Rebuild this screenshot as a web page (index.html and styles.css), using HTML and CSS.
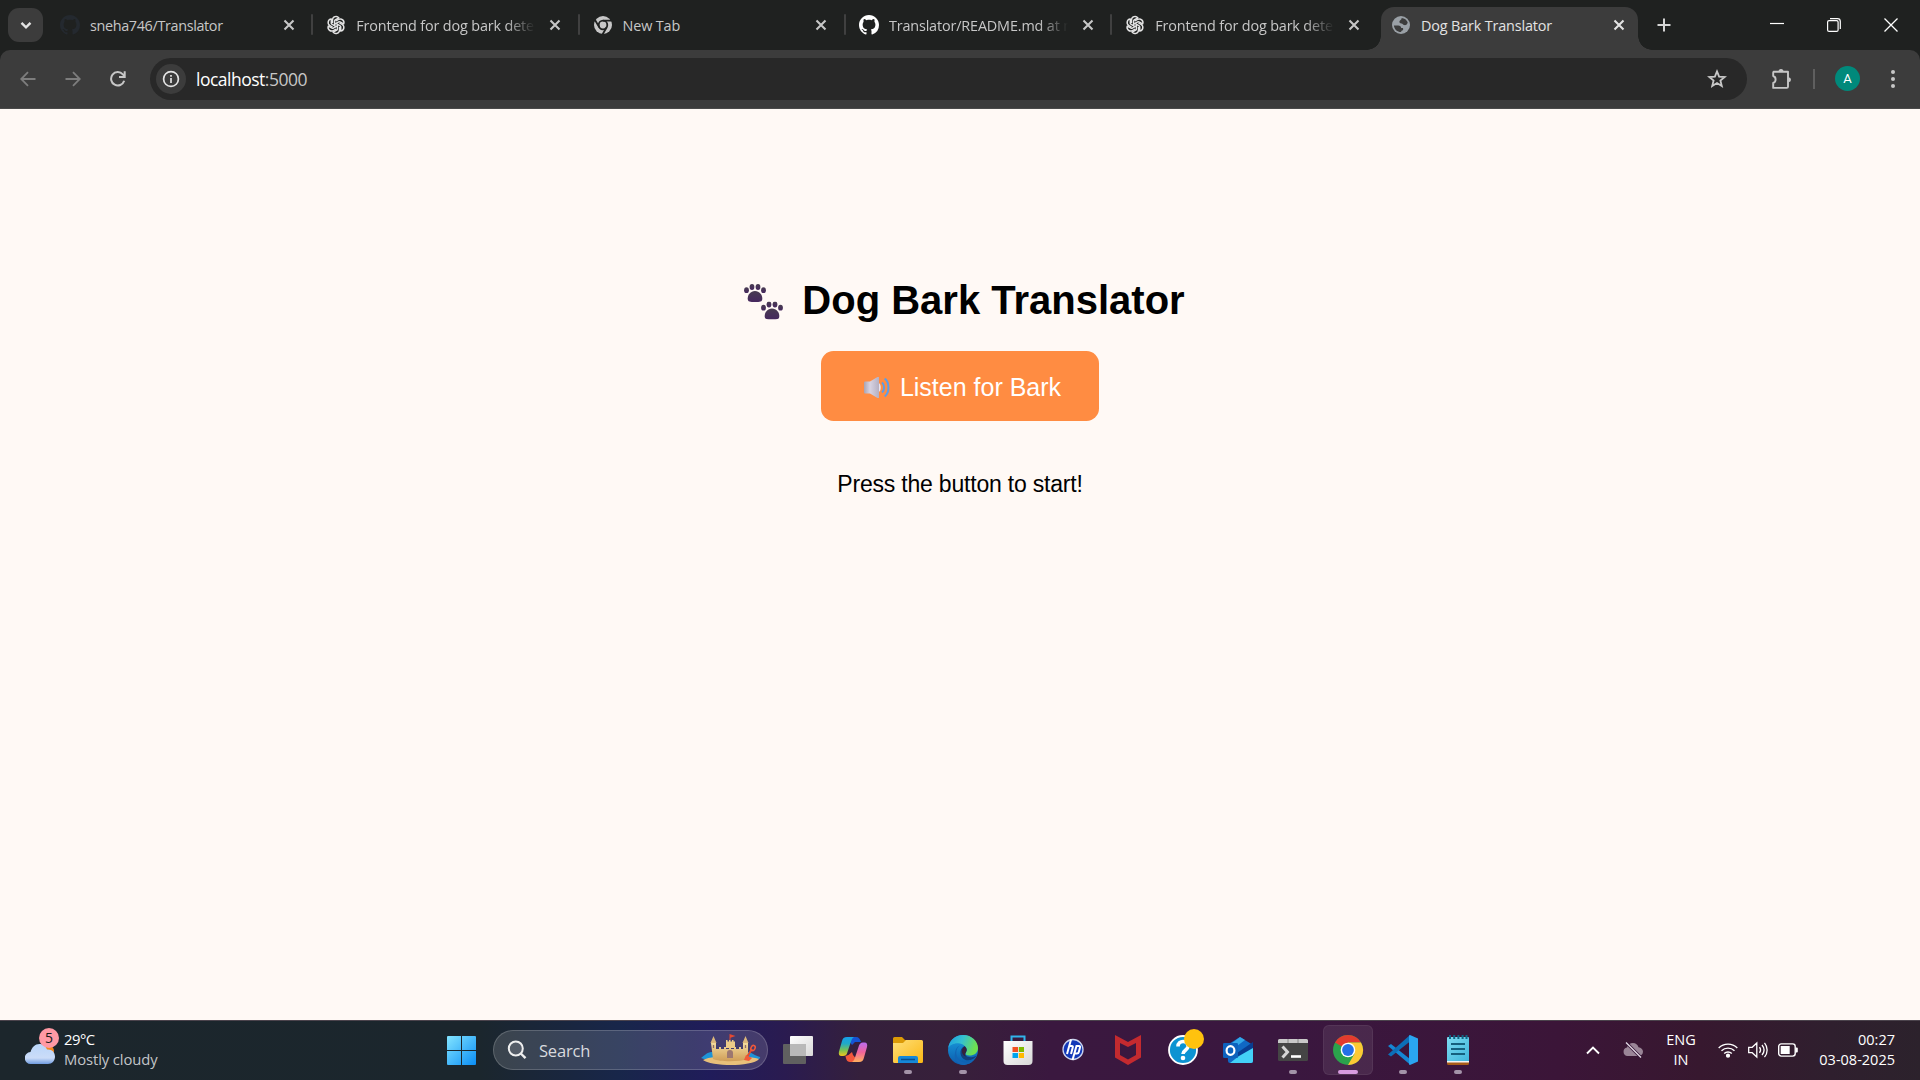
FILE: index.html
```
<!DOCTYPE html>
<html lang="en">
<head>
<meta charset="utf-8">
<title>Dog Bark Translator</title>
<link rel="stylesheet" href="styles.css">
</head>
<body>
<svg class="defs" aria-hidden="true">
  <defs>
    <symbol id="close" viewBox="0 0 12 12"><path d="M1.500 1.500l9 9m0-9l-9 9" fill="none" stroke="currentColor" stroke-width="2.100"/></symbol>
    <symbol id="github" viewBox="0 0 16 16"><path fill="currentColor" d="M8 0C3.580 0 0 3.580 0 8c0 3.540 2.290 6.530 5.470 7.590.4.070.55-.17.55-.38 0-.19-.01-.82-.01-1.490-2.010.37-2.530-.49-2.690-.94-.09-.23-.48-.94-.82-1.130-.28-.15-.68-.52-.01-.53.63-.01 1.080.58 1.230.82.72 1.210 1.870.87 2.330.66.070-.52.28-.87.51-1.070-1.780-.2-3.640-.89-3.640-3.950 0-.87.31-1.590.82-2.150-.08-.2-.36-1.020.080-2.120 0 0 .67-.21 2.200.82.64-.18 1.320-.27 2-.27s1.360.090 2 .27c1.530-1.040 2.200-.82 2.200-.82.44 1.100.16 1.920.080 2.120.51.56.82 1.270.82 2.150 0 3.070-1.870 3.750-3.650 3.950.29.25.54.73.54 1.480 0 1.070-.01 1.930-.01 2.200 0 .21.15.46.55.38A8.010 8.010 0 0 0 16 8c0-4.420-3.580-8-8-8z"/></symbol>
    <symbol id="knot" viewBox="-13 -13 26 26"><g fill="none" stroke="currentColor" stroke-width="1.900" stroke-linejoin="round">
      <path id="petal" d="M-4.600-2.500V-6.500A4.700 4.700 0 0 1 3.800-9.300L-1-6.500a1.600 1.600 0 0 0-.8 1.400V.9"/>
      <use href="#petal" transform="rotate(60)"/><use href="#petal" transform="rotate(120)"/><use href="#petal" transform="rotate(180)"/><use href="#petal" transform="rotate(240)"/><use href="#petal" transform="rotate(300)"/></g></symbol>
    <symbol id="paw" viewBox="0 0 22 18"><ellipse cx="2.500" cy="6.200" rx="2.400" ry="2.900"/><ellipse cx="8" cy="3" rx="2.400" ry="3"/><ellipse cx="14" cy="3" rx="2.400" ry="3"/><ellipse cx="19.500" cy="6.200" rx="2.400" ry="2.900"/><path d="M11 7c-4.500 0-7.300 4-7.300 7.500S6 18 11 18s7.300 0 7.300-3.500S15.500 7 11 7z"/></symbol>
    <linearGradient id="gwin" x2="1" y2="1"><stop stop-color="#83e4ff"/><stop offset="1" stop-color="#0a8df5"/></linearGradient>
    <linearGradient id="gcloud" x2="0" y2="1"><stop stop-color="#b9d6fa"/><stop offset=".7" stop-color="#cbdcf8"/><stop offset="1" stop-color="#6f9be0"/></linearGradient>
    <linearGradient id="gwhite" x2="1" y2="1"><stop stop-color="#fff"/><stop offset="1" stop-color="#d8d8d8"/></linearGradient>
    <linearGradient id="gcopA" x2="0" y2="1"><stop stop-color="#16a0ea"/><stop offset=".35" stop-color="#20a9c8"/><stop offset=".7" stop-color="#7bc251"/><stop offset="1" stop-color="#f2c51d"/></linearGradient>
    <linearGradient id="gcopB" x2="0" y2="1"><stop stop-color="#b86cf0"/><stop offset=".5" stop-color="#f0649a"/><stop offset="1" stop-color="#ffb05f"/></linearGradient>
    <linearGradient id="gfold" x2="1" y2="1"><stop stop-color="#ffdf78"/><stop offset="1" stop-color="#fbb714"/></linearGradient>
    <linearGradient id="gedgeA" x2="1" y2=".3"><stop stop-color="#1b9de2"/><stop offset=".5" stop-color="#35c1d0"/><stop offset="1" stop-color="#6ee04f"/></linearGradient>
    <linearGradient id="gedgeB" x2="0" y2="1"><stop stop-color="#1ba0e0"/><stop offset="1" stop-color="#0b5bad"/></linearGradient>
    <linearGradient id="gpaw" x2="0" y2="1"><stop stop-color="#483c50"/><stop offset="1" stop-color="#46285f"/></linearGradient>
    <linearGradient id="gsand" x2="0" y2="1"><stop stop-color="#f3da9c"/><stop offset="1" stop-color="#cf9d57"/></linearGradient>
    <linearGradient id="gspk" x2="1"><stop stop-color="#a9a4b4"/><stop offset=".4" stop-color="#d8d3e2"/><stop offset="1" stop-color="#b5b0c2"/></linearGradient>
    <linearGradient id="gnote" x2="1" y2="1"><stop stop-color="#7edcf2"/><stop offset="1" stop-color="#3fb6dc"/></linearGradient>
  </defs>
</svg>

<header class="tabstrip">
  <button class="tab-search" aria-label="Search tabs"><svg width="12" height="9" viewBox="0 0 12 9"><path d="M1.500 1.800L6 6.300l4.500-4.500" fill="none" stroke="#e3e3e3" stroke-width="2.400"/></svg></button>
  <div class="tabs">
    <div class="tab"><svg class="fav gh-dark"><use href="#github"/></svg><span class="title tight">sneha746/Translator</span><svg class="x"><use href="#close"/></svg></div>
    <div class="tab"><svg class="fav knot"><use href="#knot"/></svg><span class="title fade">Frontend for dog bark detection</span><svg class="x"><use href="#close"/></svg></div>
    <div class="tab"><svg class="fav" viewBox="0 0 20 20"><circle cx="10" cy="10" r="9" fill="#c7c7c7"/><circle cx="10" cy="10" r="4.300" fill="#c7c7c7" stroke="#1f2120" stroke-width="1.800"/><path d="M10 5.700h8.500M6.300 12.200L2 5M13.700 12.200L9.500 19.500" stroke="#1f2120" stroke-width="1.800"/></svg><span class="title">New Tab</span><svg class="x"><use href="#close"/></svg></div>
    <div class="tab"><svg class="fav gh"><use href="#github"/></svg><span class="title fade">Translator/README.md at main</span><svg class="x"><use href="#close"/></svg></div>
    <div class="tab"><svg class="fav knot"><use href="#knot"/></svg><span class="title fade">Frontend for dog bark detection</span><svg class="x"><use href="#close"/></svg></div>
    <div class="tab active"><svg class="fav" viewBox="0 0 20 20"><circle cx="10" cy="10" r="9" fill="#9aa0a6"/><path d="M10.700 2.900c2.800.2 5 1.900 6 4.300-.3 2.300-1.700 3.200-3.600 2.900-1.200-.3-1.200-1.600-2.600-1.700-1.400 0-2.200-.6-2.100-1.900.1-1.200 2.300-1.700 2.300-3.600zM2.900 10.500h4.300c1.800 0 3 1 3 2.500h1.700c.9 1.300 0 2.500-1.300 2.700l-.6 1.400c-3.700-.1-6.800-2.900-7.100-6.600z" fill="#3c3c3c"/></svg><span class="title">Dog Bark Translator</span><svg class="x"><use href="#close"/></svg></div>
  </div>
  <svg class="plus" width="14" height="14" viewBox="0 0 14 14"><path d="M7 .5v13M.5 7h13" stroke="#d5d5d5" stroke-width="2"/></svg>
  <div class="winctl">
    <svg width="14" height="14" viewBox="0 0 14 14"><path d="M0 5.500h14" stroke="#fff" stroke-width="1.200"/></svg>
    <svg width="14" height="14" viewBox="0 0 14 14"><rect x=".6" y="2.600" width="10.500" height="10.800" rx="1.500" fill="none" stroke="#fff" stroke-width="1.200"/><path d="M3 .6h7.500a2.800 2.800 0 0 1 2.800 2.800V11" fill="none" stroke="#fff" stroke-width="1.200"/></svg>
    <svg width="14" height="14" viewBox="0 0 14 14"><path d="M.5.5l13 13m0-13l-13 13" stroke="#fff" stroke-width="1.300"/></svg>
  </div>
</header>

<nav class="toolbar">
  <div class="navbtns">
    <svg width="16" height="16" viewBox="0 0 16 16"><path d="M15.500 8H1.500M8 1.200L1.200 8 8 14.800" fill="none" stroke="#7d7d7d" stroke-width="1.800"/></svg>
    <svg width="16" height="16" viewBox="0 0 16 16"><path d="M.5 8h14M8 1.200L14.800 8 8 14.800" fill="none" stroke="#7d7d7d" stroke-width="1.800"/></svg>
    <svg width="16" height="16" viewBox="0 0 16 16"><path d="M14.200 9.800A6.700 6.700 0 1 1 12.800 3.300L14.500 5" fill="none" stroke="#c7c7c7" stroke-width="2"/><path d="M14.700.3v5.800H9" fill="none" stroke="#c7c7c7" stroke-width="2"/></svg>
  </div>
  <div class="omnibox">
    <span class="info"><svg width="18" height="18" viewBox="0 0 18 18"><circle cx="9" cy="9" r="7.400" fill="none" stroke="#e3e3e3" stroke-width="1.700"/><path d="M9 8v5M9 4.900v1.800" stroke="#e3e3e3" stroke-width="1.700"/></svg></span>
    <span class="url">localhost<span class="port">:5000</span></span>
    <svg class="star" width="20" height="20" viewBox="0 0 20 20"><path d="M10 2.400l2.100 5.200 5.600.4-4.300 3.600 1.400 5.400L10 14.100 5.200 17l1.400-5.400L2.300 8l5.600-.4z" fill="none" stroke="#c7c7c7" stroke-width="1.800"/></svg>
  </div>
  <svg class="ext" width="22" height="22" viewBox="0 0 22 22"><path d="M2.500 3.800H17v14.900a1.200 1.200 0 0 1-1.200 1.200H2.200V15c3.200-1 3.200-6 0-7V4.500z" fill="none" stroke="#c7c7c7" stroke-width="1.900" stroke-linejoin="round"/><path d="M7.500 3.500a2.500 2.500 0 0 1 5 0zM17.500 9.200a2.500 2.500 0 0 1 0 5z" fill="#c7c7c7"/></svg>
  <i class="tsep"></i>
  <span class="avatar">A</span>
  <svg class="dots" width="6" height="20" viewBox="0 0 6 20" fill="#c7c7c7"><circle cx="3" cy="3" r="2"/><circle cx="3" cy="10" r="2"/><circle cx="3" cy="17" r="2"/></svg>
</nav>

<main class="page">
  <h1><svg class="paws" width="39" height="36" viewBox="0 0 39 36" fill="url(#gpaw)"><use href="#paw" width="22" height="18"/><use href="#paw" x="17" y="17.500" width="22" height="18"/></svg><span>Dog Bark Translator</span></h1>
  <button class="listen"><svg width="26" height="21" viewBox="0 0 26 21"><path d="M14.500 6c3 .5 3 8.500 0 9z" fill="#e8e3ee"/><path d="M1 4.500h5L13.500 0h1.500v21h-1.500L6 16.500H1A1 1 0 0 1 0 15.500v-10a1 1 0 0 1 1-1z" fill="url(#gspk)"/><path d="M18 5.500c2.800 2.500 2.800 7.500 0 10M20.700 1.500c5 4 5 14 0 18" fill="none" stroke="#5a9de8" stroke-width="2"/></svg><span>Listen for Bark</span></button>
  <p>Press the button to start!</p>
</main>

<footer class="taskbar">
  <div class="weather">
    <div class="wicon"><svg width="30" height="20" viewBox="0 0 30 20"><circle cx="23" cy="7" r="6" fill="#f5871f"/><path d="M6 20a6 6 0 0 1-.5-12C7 3 10 0 14.500 0c4 0 6.500 2.500 7.500 5.500C27 5 30 8.500 30 12.500c0 4.500-3 7.500-7 7.500z" fill="url(#gcloud)"/></svg><span class="badge">5</span></div>
    <div class="wtext"><span class="temp">29°C</span><span class="cond">Mostly cloudy</span></div>
  </div>

  <div class="apps">
    <svg class="start" width="29" height="29" viewBox="0 0 29 29" fill="url(#gwin)"><path d="M1 0h13v14H0V1a1 1 0 0 1 1-1zM15 0h13a1 1 0 0 1 1 1v13H15zM0 15h14v14H1a1 1 0 0 1-1-1zM15 15h14v13a1 1 0 0 1-1 1H15z"/></svg>
    <div class="search">
      <svg width="20" height="20" viewBox="0 0 20 20"><circle cx="8.800" cy="8.500" r="7" fill="#ffffff22" stroke="#eee" stroke-width="2"/><path d="M13.800 13.500l4.700 4.700" stroke="#eee" stroke-width="2.400"/></svg>
      <span>Search</span>
      <svg class="castle" width="60" height="32" viewBox="0 0 60 32"><path d="M0 24c3-2 5-5 10-6h38c5 2 7 4 11 5 1 2-3 3-8 3H6z" fill="#1e94d8"/><path d="M2 26c6-3 17-4 28-4s22 1 28 3c-3 4-17 6-28 6S5 29 2 26z" fill="#e8c07a"/><path d="M10 9h5v6h3v-2h2v2h3v-2h2v2h3v-2h2v2h3v-2h2v2h3v-2h2v2h2V9h5v16c-9 3-28 3-35 0z" fill="url(#gsand)"/><path d="M9.500 9l3-7 3 7zM41.500 9l3-7 3 7z" fill="#dbb67a"/><path d="M25 14V6h1.500v1.500H28V6h1.500v1.500H31V6h1.500v1.500H34V14z" fill="#eccb88"/><path d="M28.500 6V0l6 2-5 1.700V6z" fill="#e54931"/><path d="M26 24v-5a3 3 0 0 1 6 0v5z" fill="#9c7770"/><path d="M12.500 11v3M44.500 11v3" stroke="#8c6b6b" stroke-width="1.300"/><path d="M51 15l-5 8" stroke="#e54a2b" stroke-width="2"/><ellipse cx="52" cy="14" rx="2" ry="2.700" fill="none" stroke="#f0583a" stroke-width="1.500" transform="rotate(30 52 14)"/><path d="M45 21l6 3-3 3-5-1z" fill="#f05b38"/></svg>
    </div>
    <div class="icons">
      <div class="app"><svg width="32" height="32" viewBox="0 0 32 32"><rect x="1" y="10" width="23" height="20" rx="1" fill="#606060"/><rect x="8" y="2" width="23" height="20" rx="1" fill="url(#gwhite)"/><path d="M8 10h16v12H8z" fill="#b9b9b9"/></svg></div>
      <div class="app"><svg width="32" height="32" viewBox="0 0 32 32"><path d="M10 3h9c3 0 4 2 5 5h-6l-3 3-2-3z" fill="#1553d4"/><path d="M10 3h7c-2 1-2.500 3-3.500 6l-3 9c-.8 3-2 4-4.500 4H4.500C2 22 1.400 20 2 17.500L5 7c.7-2.500 2-4 5-4z" fill="url(#gcopA)"/><path d="M22 28h-9c-3 0-4-3-4.500-6l3-1 3.500-3 1 3z" fill="#f2573c"/><path d="M22 28h-7c2-1 2.500-3 3.500-6l3-9c.8-3 2-4.500 4.500-4.500h1.500c2.500 0 3.100 2 2.500 4.500l-3 10.500C26.300 26.500 25 28 22 28z" fill="url(#gcopB)"/></svg></div>
      <div class="app run"><svg width="32" height="32" viewBox="0 0 32 32"><path d="M1 4.500A1.500 1.500 0 0 1 2.500 3H10l3 3h16v8H1z" fill="#dc9a06"/><path d="M1 9h10l3-3h15.500A1.500 1.500 0 0 1 31 7.500v20a1.500 1.500 0 0 1-1.500 1.500h-27A1.500 1.500 0 0 1 1 27.500z" fill="url(#gfold)"/><path d="M6 29v-5a2 2 0 0 1 2-2h16a2 2 0 0 1 2 2v5z" fill="#1688d8"/><path d="M9 25.500h14" stroke="#0a4f8d" stroke-width="1.500"/></svg></div>
      <div class="app run"><svg width="32" height="32" viewBox="0 0 32 32"><circle cx="16" cy="16" r="15" fill="url(#gedgeB)"/><path d="M1.200 14C2.500 6 8.500 1 16 1c9 0 15 6.500 15 13 0 5-4 7.500-8.500 7.500-3 0-4.500-1-4-2.500 1.500-2 1.500-8-5.500-9.500C7.500 8.500 3 11 1.200 14z" fill="url(#gedgeA)"/><path d="M13 11.500c-5 3-5 11 0 15 5 3.500 10 2 15-2.500-3 5-7.500 7-12 7C9 30 7 24 8 19c.6-4 2-6.500 5-7.500z" fill="#1265b4"/><path d="M17.500 12c3 2 2.800 5 1 7-1 2 1.500 4.500 6 4.200 2.500-.2 4-1 5.200-1.700-2 3.500-7 5.500-11 4.500-6-1.500-7.500-11-1.200-14z" fill="#123f7d"/><path d="M17.500 12.500c2.500 1.500 2.500 4.500 1 6.500-1 1.500-.5 2.500.5 3.500-4-1-6-7-1.500-10z" fill="#36203c"/></svg></div>
      <div class="app"><svg width="32" height="32" viewBox="0 0 32 32"><path d="M9.500 8V2.500h13V8" fill="none" stroke="#31b4eb" stroke-width="2"/><path d="M1.500 7h29v20a4 4 0 0 1-4 4h-21a4 4 0 0 1-4-4z" fill="url(#gwhite)"/><path d="M10.500 13H16v5h-5.500z" fill="#f25022"/><path d="M16.800 13H22v5h-5.200z" fill="#7fba00"/><path d="M10.500 19H16v5h-5.500z" fill="#00a4ef"/><path d="M16.800 19H22v5h-5.200z" fill="#ffb900"/></svg></div>
      <div class="app"><svg width="32" height="32" viewBox="0 0 32 32"><circle cx="16" cy="15.500" r="10" fill="#1238b8" stroke="#c9d3ef" stroke-width="1.300"/><g fill="none" stroke="#fff" stroke-width="2"><path d="M14 5.500L10 20M12.300 12h2.500c1 0 1.200.5 1 1.300L14 20M15.500 26l4-14h2.500c1 0 1.300.5 1 1.500l-1.200 4.500c-.2 1-.8 1.400-1.800 1.400h-2"/></g></svg></div>
      <div class="app"><svg width="32" height="32" viewBox="0 0 32 32"><path d="M3 1l13 7 13-7v22.500L16 31 3 23.500zM8 9v12l8 4.500 8-4.500V9l-8 4z" fill="#c42a2f" fill-rule="evenodd"/></svg></div>
      <div class="app"><svg class="help" width="38" height="38" viewBox="0 0 38 38"><circle cx="16" cy="22" r="14" fill="#0d93d2" stroke="#fff" stroke-width="1.800"/><path d="M11 18.500c0-7 10.500-6.500 10 0-.4 4-5 3.500-5 7.500" fill="none" stroke="#fff" stroke-width="3.600"/><circle cx="16" cy="30" r="2.300" fill="#fff"/><circle cx="27" cy="11" r="10" fill="#ffc20e"/></svg></div>
      <div class="app"><svg width="32" height="32" viewBox="0 0 32 32"><path d="M5 11L18 3l13 8v16a2 2 0 0 1-2 2H8a2 2 0 0 1-2-2z" fill="#1068c4"/><path d="M10 9l8-6 5 3-12 9z" fill="#33a7e8"/><path d="M15 19l16-11v7L17 24z" fill="#083d91"/><path d="M31 14v13a2 2 0 0 1-2 2H8l9-7z" fill="#43d1f7"/><rect x="1" y="9" width="15" height="15" rx="1.300" fill="#0d62bd"/><ellipse cx="8.500" cy="16.500" rx="3.900" ry="4.400" fill="none" stroke="#fff" stroke-width="2.200"/></svg></div>
      <div class="app run"><svg width="32" height="32" viewBox="0 0 32 32"><rect x="1" y="5" width="30" height="22" rx="1.500" fill="#454545"/><path d="M1 9V6.500A1.500 1.500 0 0 1 2.500 5h27A1.500 1.500 0 0 1 31 6.500V9z" fill="#c9c9c9"/><path d="M11 5v4M21 5v4" stroke="#888"/><path d="M5.500 12.500l5 5.500-5 5.500" fill="none" stroke="#d5d5d5" stroke-width="3"/><path d="M14 22.500h10" stroke="#fff" stroke-width="2.600"/></svg></div>
      <div class="app run current"><svg width="32" height="32" viewBox="0 0 32 32"><circle cx="16" cy="16" r="15" fill="#2ba24c"/><path d="M16 16L3 8.500A15 15 0 0 1 29 8.500H16z" fill="#e33b2e"/><path d="M29 8.500A15 15 0 0 1 16 31l6.500-11.300L16 8.500z" fill="#fcc934"/><circle cx="16" cy="16" r="7.300" fill="#fff"/><circle cx="16" cy="16" r="5.900" fill="#2470e8"/></svg></div>
      <div class="app run"><svg width="32" height="32" viewBox="0 0 32 32"><path d="M1 12l3-2 19 15v5.500z" fill="#1587d4"/><path d="M1 20.500l3 2L23 7.500V1z" fill="#0c6fb8"/><path d="M23 1l8 3.500v23L23 31c-1 0-1-1-1-1.500V2.500C22 2 22 1 23 1z" fill="#2aa5f0"/></svg></div>
      <div class="app run"><svg width="32" height="32" viewBox="0 0 32 32"><path d="M5 28h22v1.500a1.500 1.500 0 0 1-1.500 1.500h-19A1.500 1.500 0 0 1 5 29.500z" fill="#a85c18"/><path d="M5 26h22v2.500H5z" fill="#f4f4f4"/><path d="M5 4a1 1 0 0 1 1-1h20a1 1 0 0 1 1 1v23H5z" fill="url(#gnote)"/><path d="M8 1v4M12.200 1v4M16.400 1v4M20.600 1v4M24.500 1v4" stroke="#116584" stroke-width="2"/><path d="M9 10h14M9 15h14M9 20h14" stroke="#15607e" stroke-width="1.800"/></svg></div>
    </div>
  </div>

  <div class="tray">
    <svg class="chev" width="14" height="9" viewBox="0 0 14 9"><path d="M1 7.500l6-6 6 6" fill="none" stroke="#fff" stroke-width="1.900"/></svg>
    <svg class="cloud" width="20" height="16" viewBox="0 0 20 16"><path d="M4.500 14A4.300 4.300 0 0 1 4 5.500C5 2.500 7 1 9.800 1c3 0 5 1.700 5.700 4.300 2.500.2 4.500 2 4.500 4.400 0 2.500-2 4.300-4.300 4.300z" fill="#9a8597"/><path d="M3 .5l15 15" stroke="#38183a" stroke-width="3"/><path d="M3 .5l15 15" stroke="#e5dce5" stroke-width="1.300"/></svg>
    <div class="lang"><span>ENG</span><span>IN</span></div>
    <svg class="wifi" width="20" height="16" viewBox="0 0 20 16" fill="none" stroke="#fff" stroke-width="1.400"><path d="M.7 6a13 13 0 0 1 18.600 0M3.500 8.800a9.200 9.200 0 0 1 13 0M6.200 11.500a5.400 5.400 0 0 1 7.600 0"/><circle cx="10" cy="13.700" r="1.400" fill="#fff"/></svg>
    <svg class="sound" width="20" height="18" viewBox="0 0 20 18" fill="none" stroke="#fff" stroke-width="1.300"><path d="M.7 6.300h3.500L8.800 2v14l-4.600-4.300H.7zM11.500 6.200c1.200 1.600 1.200 4 0 5.600M14 4c2.500 3 2.500 7 0 10M16.500 1.800c3.500 4.200 3.500 10.200 0 14.400"/></svg>
    <svg class="batt" width="20" height="14" viewBox="0 0 20 14"><rect x=".7" y=".9" width="16.500" height="12.200" rx="2.500" fill="none" stroke="#fff" stroke-width="1.400"/><path d="M2.700 3h9v8h-9z" fill="#fff"/><path d="M17.500 4.500h1.300a1 1 0 0 1 1 1v3a1 1 0 0 1-1 1h-1.300z" fill="#fff"/></svg>
    <div class="clock"><span class="time">00:27</span><span class="date">03-08-2025</span></div>
  </div>
</footer>
</body>
</html>
```
FILE: styles.css
```
* { box-sizing: border-box; }
body {
  margin: 0;
  width: 1920px;
  height: 1080px;
  overflow: hidden;
  display: flex;
  flex-direction: column;
  background: #1f2120;
  font-family: "Open Sans", "Noto Sans", sans-serif;
}
svg { display: block; flex: none; }
button { border: 0; padding: 0; }
span { white-space: nowrap; }
.defs { position: absolute; width: 0; height: 0; }

/* Tab strip */
.tabstrip { height: 50px; display: flex; align-items: flex-start; background: #1f2120; }
.tab-search {
  width: 35px; height: 34px; margin: 8px 0 0 8px;
  display: flex; align-items: center; justify-content: center;
  background: #3c3c3c; border-radius: 11px;
}
.tabs { display: flex; margin-left: 5px; }
.tab {
  width: 266.300px; height: 50px; padding: 0 19.500px 0 12px;
  display: flex; align-items: center; color: #c7c7c7;
  position: relative;
}
.tab:not(.active)::after {
  content: ""; position: absolute; right: 1px; top: 14px;
  width: 2px; height: 21px; border-radius: 1px; background: #404040;
}
.tab:nth-last-child(2)::after { display: none; }
.fav { width: 20px; height: 20px; margin-right: 10px; }
.gh { color: #fff; }
.gh-dark { color: #24292f; }
.knot { color: #e3e3e3; }
.title { font-size: 14.400px; letter-spacing: -.15px; line-height: 20px; width: 180px; padding-top: 1px; overflow: hidden; }
.tight { letter-spacing: -.35px; }
.fade { -webkit-mask-image: linear-gradient(90deg, #000 150px, transparent 179px); mask-image: linear-gradient(90deg, #000 150px, transparent 179px); }
.x { width: 12px; height: 12px; margin-left: auto; }
.tab.active {
  width: 257px; height: 43px; margin-top: 7px; margin-left: 1.500px; padding: 0 13px 7px 10px;
  background: #3c3c3c; border-radius: 13px 13px 0 0; color: #e3e3e3;
}
.tab.active::before, .tab.active::after {
  content: ""; position: absolute; bottom: 0; width: 14px; height: 14px;
}
.tab.active::before { left: -14px; background: radial-gradient(circle at 0 0, transparent 13.500px, #3c3c3c 14px); }
.tab.active::after { right: -14px; background: radial-gradient(circle at 100% 0, transparent 13.500px, #3c3c3c 14px); }
.plus { margin: 18px 0 0 19px; }
.winctl { display: flex; gap: 43px; margin: 18px 22px 0 auto; }

/* Toolbar */
.toolbar {
  height: 59px; padding: 0 24px 1px 20px;
  display: flex; align-items: center;
  background: #3c3c3c; border-bottom: 1px solid #4a4a4a; border-radius: 10px 10px 0 0;
}
.navbtns { display: flex; gap: 29px; width: 130px; }
.omnibox {
  width: 1597px; height: 42px; padding: 0 20px 0 6px; border-radius: 21px;
  display: flex; align-items: center; background: #282828;
}
.info { width: 30px; height: 30px; border-radius: 50%; background: #3c3c3c; display: flex; align-items: center; justify-content: center; }
.url { margin-left: 10px; padding-top: 1px; font-size: 17.500px; letter-spacing: -.5px; color: #fff; }
.port { color: #c7c7c7; }
.star { margin-left: auto; }
.ext { margin-left: 24px; }
.tsep { width: 2px; height: 20px; margin-left: 20px; background: #5f5f5f; }
.avatar {
  width: 25px; height: 25px; margin-left: 20px; border-radius: 50%;
  background: #00897b; color: #fff; font: 13px/25px Roboto, sans-serif; text-align: center;
}
.dots { margin-left: auto; }

/* Page */
.page {
  height: 911px; background: #fff9f5; color: #000;
  display: flex; flex-direction: column; align-items: center;
  font-family: "Liberation Sans", Arial, sans-serif;
}
h1 {
  margin: 168px 0 0; height: 46px; padding-left: 9px;
  display: flex; align-items: center; gap: 19px;
  font-size: 40px; line-height: 46px;
}
.paws { margin-top: 4px; }
.listen {
  width: 278px; height: 70px; margin-top: 28px; padding: 2px 0 0 5px; border-radius: 12.500px;
  display: flex; align-items: center; justify-content: center; gap: 10px;
  background: #ff8c42; color: #fff; font: 25px/30px "Liberation Sans", Arial, sans-serif;
}
.page p { margin: 49px 0 0; font-size: 23px; letter-spacing: -.2px; line-height: 28px; }

/* Taskbar */
.taskbar {
  height: 60px; display: flex; align-items: stretch; color: #fff;
  border-top: 1px solid #4b434c;
  background: linear-gradient(90deg, #1c262c 0, #1b262d 480px, #18264a 620px, #201c5a 710px, #2a1b50 785px, #35203c 860px, #37203a 950px, #3a183f 1050px, #3a173f 1280px, #3b1538 1560px, #37182f 1700px, #2f1f2e 1830px, #2c222c 1920px);
}
.weather { width: 447px; padding-left: 25px; display: flex; gap: 9px; }
.wicon { width: 30px; padding-top: 23px; position: relative; }
.badge {
  position: absolute; left: 14px; top: 7px; width: 20px; height: 20px; border-radius: 50%;
  background: #ff99a4; color: #1a1a1a; font-size: 14px; line-height: 20px; text-align: center;
}
.wtext { display: flex; flex-direction: column; padding-top: 8px; font-size: 14.800px; letter-spacing: -.1px; line-height: 20px; }
.temp { letter-spacing: -.5px; }
.cond { color: #c3c5c8; }
.apps { display: flex; align-items: center; padding-bottom: 1px; }
.start { margin-right: 17px; }
.search {
  width: 275px; height: 40px; padding: 0 6px 0 13px; border-radius: 20px;
  display: flex; align-items: center; border: 1px solid #ffffff2e; background: #ffffff24;
  color: #d8dade; font-size: 16.500px; letter-spacing: -.2px;
}
.search span { margin-left: 12px; }
.castle { margin-left: auto; }
.icons { display: flex; gap: 5px; margin-left: 5px; }
.app {
  width: 50px; height: 50px; border-radius: 6px; position: relative;
  display: flex; align-items: center; justify-content: center;
}
.help { margin: -7px -6px 0 0; }
.run::after {
  content: ""; position: absolute; left: 21px; bottom: 1px;
  width: 8px; height: 4px; border-radius: 2px; background: #a393a8;
}
.current { background: #ffffff14; border: 1px solid #ffffff10; }
.current::after { left: 14px; bottom: 0; width: 20px; background: #d89be0; }
.tray { display: flex; align-items: center; margin-left: auto; padding: 0 25px 1px 0; font-size: 14.500px; line-height: 20px; }
.cloud { margin-left: 23px; }
.lang { display: flex; flex-direction: column; width: 48px; margin-left: 14px; text-align: center; }
.wifi { margin-left: 13px; }
.sound { margin-left: 10px; }
.batt { margin-left: 10px; }
.clock { width: 97px; display: flex; flex-direction: column; text-align: right; }
```
